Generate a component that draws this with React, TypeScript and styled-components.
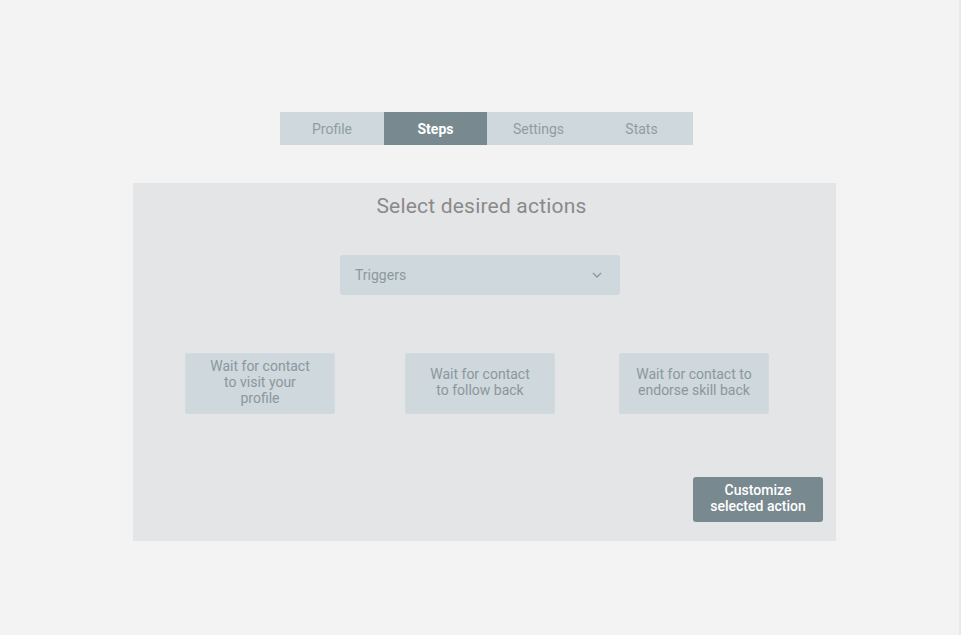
import React, { FC } from "react";
import styled, { createGlobalStyle } from "styled-components";

const GlobalStyle = createGlobalStyle`
	html, body {
		margin: 0;
		padding: 0;
		background: #f3f3f3;
		font-family: Roboto, "Liberation Sans", Arial, sans-serif;
	}
`;

const Page = styled.div`
	width: 961px;
	height: 635px;
	box-sizing: border-box;
	border-right: 2px solid #e9e9e9;
	display: flex;
	flex-direction: column;
	align-items: flex-start;
	padding-top: 112px;
`;

const TabBar = styled.div`
	display: grid;
	grid-template-columns: 104px 103px 103px 103px;
	margin-left: 280px;
	height: 33px;
	background: #cfd8dd;
`;

const Tab = styled.div<{ $active?: boolean }>`
	display: flex;
	align-items: center;
	justify-content: center;
	font-size: 14px;
	font-weight: ${(p) => (p.$active ? 700 : 400)};
	color: ${(p) => (p.$active ? "#ffffff" : "#8f9da3")};
	background: ${(p) => (p.$active ? "#78898f" : "#cfd8dd")};
`;

const Panel = styled.div`
	margin-left: 133px;
	margin-top: 38px;
	width: 703px;
	height: 358px;
	box-sizing: border-box;
	background: #e4e5e7;
	display: flex;
	flex-direction: column;
	padding-top: 12px;
`;

const Title = styled.h2`
	margin: 0 6px 0 0;
	text-align: center;
	font-size: 21px;
	font-weight: 400;
	line-height: 22px;
	letter-spacing: 0.2px;
	color: #8a8a8a;
`;

const Dropdown = styled.div`
	align-self: flex-start;
	margin: 38px 0 0 207px;
	width: 280px;
	height: 40px;
	box-sizing: border-box;
	border-radius: 3px;
	background: #cfd8dd;
	display: flex;
	align-items: center;
	justify-content: space-between;
	padding: 0 18px 0 15px;
	font-size: 14px;
	color: #8b999f;
`;

const CardRow = styled.div`
	display: flex;
	padding-left: 52px;
	margin-top: 58px;
`;

const Card = styled.div<{ $gap?: number }>`
	width: 150px;
	height: 61px;
	margin-left: ${(p) => p.$gap ?? 0}px;
	box-sizing: border-box;
	border-radius: 2px;
	background: #cfd8dd;
	border: 1px solid #d3dbe0;
	display: flex;
	align-items: center;
	justify-content: center;
	text-align: center;
	font-size: 14px;
	line-height: 16px;
	color: #8a979c;
	padding-bottom: 3px;
`;

const Footer = styled.div`
	display: flex;
	justify-content: flex-end;
	padding-right: 13px;
	margin-top: 63px;
`;

const CustomizeButton = styled.button`
	width: 130px;
	height: 45px;
	border: none;
	border-radius: 3px;
	background: #78898f;
	color: #ffffff;
	font-family: inherit;
	font-size: 14px;
	font-weight: 500;
	line-height: 16px;
	padding: 0 0 3px;
`;

const Chevron: FC = () => (
	<svg width="10" height="6" viewBox="0 0 10 6" fill="none">
		<path d="M1 1l4 4 4-4" stroke="#8b999f" strokeWidth="1.4" />
	</svg>
);

const tabs = ["Profile", "Steps", "Settings", "Stats"];

const actions = [
	{ gap: 0, lines: ["Wait for contact", "to visit your", "profile"] },
	{ gap: 70, lines: ["Wait for contact", "to follow back"] },
	{ gap: 64, lines: ["Wait for contact to", "endorse skill back"] },
];

const App: FC = () => {
	return (
		<>
			<GlobalStyle />
			<Page>
				<TabBar>
					{tabs.map((t) => (
						<Tab key={t} $active={t === "Steps"}>
							{t}
						</Tab>
					))}
				</TabBar>
				<Panel>
					<Title>Select desired actions</Title>
					<Dropdown>
						<span>Triggers</span>
						<Chevron />
					</Dropdown>
					<CardRow>
						{actions.map(({ gap, lines }) => (
							<Card key={lines.join(" ")} $gap={gap}>
								<span>
									{lines.map((l, i) => (
										<React.Fragment key={l}>
											{i > 0 && <br />}
											{l}
										</React.Fragment>
									))}
								</span>
							</Card>
						))}
					</CardRow>
					<Footer>
						<CustomizeButton>
							Customize
							<br />
							selected action
						</CustomizeButton>
					</Footer>
				</Panel>
			</Page>
		</>
	);
};

export default App;
